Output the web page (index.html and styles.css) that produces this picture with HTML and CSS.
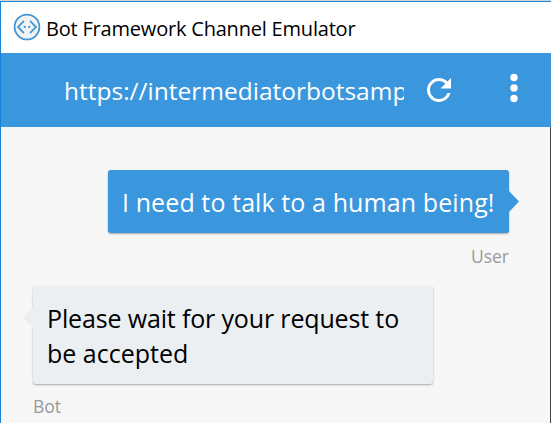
FILE: index.html
```html
<!DOCTYPE html>
<html lang="en">
<head>
<meta charset="utf-8">
<title>Bot Framework Channel Emulator</title>
<link rel="stylesheet" href="styles.css">
</head>
<body>
<div class="window">
  <header class="titlebar">
    <svg class="logo" viewBox="0 0 28 28" width="28" height="28">
      <circle cx="14" cy="14" r="12.4" fill="#f4f4f4" stroke="#4497d6" stroke-width="1.8"/>
      <path d="M11 7.8 5 14l6 6.2M17 7.8l6 6.2-6 6.2" fill="none" stroke="#4497d6" stroke-width="1.8"/>
      <circle cx="11.8" cy="14" r="1.15" fill="#4497d6"/>
      <circle cx="16.2" cy="14" r="1.15" fill="#4497d6"/>
    </svg>
    <span class="title">Bot Framework Channel Emulator</span>
  </header>
  <nav class="addressbar">
    <div class="url">https://intermediatorbotsamp</div>
    <svg class="refresh" viewBox="4 4 16 16" width="24" height="24" fill="#fff"><path d="M17.65 6.35A7.96 7.96 0 0 0 12 4a8 8 0 1 0 7.73 10h-2.08A6 6 0 1 1 12 6c1.66 0 3.14.69 4.22 1.78L13 11h7V4z"/></svg>
    <svg class="more" viewBox="0 0 8 30" width="8" height="30" fill="#fff"><circle cx="4" cy="4.5" r="3.7"/><circle cx="4" cy="15" r="3.7"/><circle cx="4" cy="25.5" r="3.7"/></svg>
  </nav>
  <main class="chat">
    <section class="message user">
      <div class="bubble"><span class="line ask">I need to talk to a human being!</span></div>
      <div class="from">User</div>
    </section>
    <section class="message bot">
      <div class="bubble"><span class="line wait">Please wait for your request to</span><span class="line">be accepted</span></div>
      <div class="from">Bot</div>
    </section>
  </main>
</div>
</body>
</html>
```
FILE: styles.css
```css
* { box-sizing: border-box; }
body {
  margin: 0;
  font-family: "Open Sans", "Noto Sans", sans-serif;
  background: #d6d6d6;
  overflow: hidden;
}
.window {
  height: 423px;
  padding-top: 1px;
  background: linear-gradient(#1883d7, #1883d7) 0 1px / 1px 100% no-repeat, #d6d6d6;
  padding-left: 1px;
}
.titlebar {
  height: 52px;
  margin-left: -1px;
  padding-left: 12px;
  border-top: 1px solid #1883d7;
  border-left: 1px solid #1883d7;
  background: #fff;
  display: flex;
  align-items: center;
}
.logo { flex: none; margin-top: -1px; }
.title {
  margin-left: 5px;
  padding-top: 2px;
  font-size: 20px;
  line-height: 30px;
  letter-spacing: -0.2px;
  white-space: nowrap;
  color: #000;
}
.addressbar {
  height: 74px;
  padding-left: 63px;
  display: flex;
  align-items: center;
  background: #3a96dd;
}
.url {
  width: 340px;
  padding-top: 2px;
  overflow: hidden;
  white-space: nowrap;
  color: #fff;
  font-size: 24.5px;
  line-height: 36px;
}
.refresh { flex: none; margin-left: 23px; }
.more { flex: none; margin-left: 59px; margin-top: -5px; }
.chat {
  height: 296px;
  padding: 43px 41px 0 32px;
  border-right: 1px solid #444;
  background: #f7f7f7;
  display: flex;
  flex-direction: column;
}
.message { display: flex; flex-direction: column; }
.user { align-items: flex-end; }
.bot { align-items: flex-start; margin-top: 17px; }
.bubble {
  position: relative;
  padding: 15px 14px;
  border-radius: 3px;
  font-size: 25px;
  line-height: 35px;
  white-space: nowrap;
  box-shadow: 0 1px 2px rgba(0, 0, 0, .32);
}
.line { display: block; }
.ask { letter-spacing: 0.1px; }
.wait { letter-spacing: -0.15px; }
.bubble::after {
  content: "";
  position: absolute;
  top: 21px;
  width: 10px;
  height: 21px;
}
.user .bubble { width: 401px; height: 63px; background: #3a96dd; color: #fff; }
.user .bubble::after { left: 100%; background: #3a96dd; clip-path: polygon(0 0, 100% 50%, 0 100%); }
.bot .bubble { width: 400px; height: 98px; background: #ebeff2; color: #000; }
.bot .bubble::after { right: 100%; background: #ebeff2; clip-path: polygon(100% 0, 0 50%, 100% 100%); }
.from {
  margin-top: 10px;
  font-size: 17.5px;
  line-height: 26px;
  color: #999;
}
.bot .from { margin-top: 9px; }
```
